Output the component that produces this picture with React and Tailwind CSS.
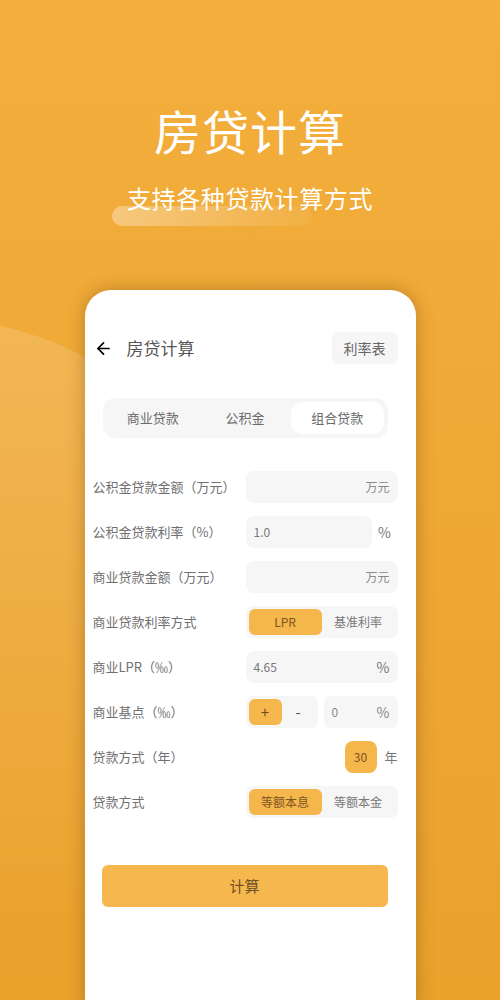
import { ArrowLeft } from 'lucide-react'

const font = { fontFamily: '"Noto Sans CJK SC", "Noto Sans", sans-serif' }

function Row({ label, children }) {
  return (
    <div className="flex items-center h-8">
      <div className="w-[153px] text-[13px] text-[#707070] whitespace-nowrap">{label}</div>
      <div className="flex-1 flex items-center h-8">{children}</div>
    </div>
  )
}

function Segment({ left, right }) {
  return (
    <div className="flex-1 h-8 rounded-lg bg-[#f6f6f6] flex items-center p-[3px] text-[12px]">
      <div className="w-[73px] h-[26px] rounded-md bg-[#f5b64c] text-[#7d5520] flex items-center justify-center">
        {left}
      </div>
      <div className="flex-1 text-center text-[#777]">{right}</div>
    </div>
  )
}

export default function App() {
  return (
    <div
      className="relative w-[500px] h-[1000px] overflow-hidden bg-gradient-to-b from-[#f3ae3c] to-[#eaa22d]"
      style={font}
    >
      {/* soft circle behind the card */}
      <div className="absolute left-[-360px] top-[320px] w-[600px] h-[600px] rounded-full bg-gradient-to-b from-white/15 to-white/0" />

      <div className="relative pt-[100px] flex flex-col items-center">
        <h1 className="text-[47px] leading-[60px] text-white tracking-[1px]">房贷计算</h1>
        <div className="relative mt-[20px]">
          <div className="absolute left-[-15px] top-[26px] w-[200px] h-[20px] rounded-full bg-gradient-to-r from-white/35 to-white/5" />
          <p className="relative text-[24px] leading-[36px] text-white tracking-[0.6px]">支持各种贷款计算方式</p>
        </div>
      </div>

      <div className="relative mt-[74px] mx-auto w-[331px] h-[720px] bg-white rounded-t-[26px] shadow-[0_0_18px_rgba(90,50,0,0.35)] pl-[8px] pr-[18px] pt-[42px]">
        <div className="flex items-center justify-between h-8">
          <div className="flex items-center">
            <ArrowLeft className="w-[19px] h-[19px] ml-[1px] text-black" strokeWidth={2.2} />
            <span className="ml-[14px] text-[17px] text-[#555]">房贷计算</span>
          </div>
          <button className="h-8 px-[12px] rounded-md bg-[#f6f6f6] text-[14px] text-[#666]">利率表</button>
        </div>

        <div className="mt-[34px] ml-[10px] w-[285px] h-10 rounded-xl bg-[#f6f6f6] grid grid-cols-3 p-1 text-[13px] text-[#6a6a6a]">
          <div className="flex items-center justify-center">商业贷款</div>
          <div className="flex items-center justify-center">公积金</div>
          <div className="flex items-center justify-center rounded-xl bg-white">组合贷款</div>
        </div>

        <div className="mt-[33px] flex flex-col gap-[13px]">
          <Row label="公积金贷款金额（万元）">
            <div className="flex-1 h-8 rounded-lg bg-[#f6f6f6] flex items-center justify-end pr-[8px] text-[12px] text-[#888]">万元</div>
          </Row>
          <Row label="公积金贷款利率（%）">
            <div className="w-[126px] h-8 rounded-lg bg-[#f6f6f6] flex items-center pl-[8px] text-[12px] text-[#777]">1.0</div>
            <div className="flex-1 text-center text-[14px] text-[#777]">%</div>
          </Row>
          <Row label="商业贷款金额（万元）">
            <div className="flex-1 h-8 rounded-lg bg-[#f6f6f6] flex items-center justify-end pr-[8px] text-[12px] text-[#888]">万元</div>
          </Row>
          <Row label="商业贷款利率方式">
            <Segment left="LPR" right="基准利率" />
          </Row>
          <Row label="商业LPR（‰）">
            <div className="flex-1 h-8 rounded-lg bg-[#f6f6f6] flex items-center justify-between px-[8px] text-[12px] text-[#777]">
              <span>4.65</span>
              <span className="text-[14px]">%</span>
            </div>
          </Row>
          <Row label="商业基点（‰）">
            <div className="w-[72px] h-8 rounded-lg bg-[#f6f6f6] flex items-center p-[3px]">
              <div className="w-[33px] h-[26px] rounded-md bg-[#f5b64c] text-[#6b4a1e] flex items-center justify-center text-[15px]">+</div>
              <div className="flex-1 text-center text-[15px] text-[#555]">-</div>
            </div>
            <div className="ml-[6px] flex-1 h-8 rounded-lg bg-[#f6f6f6] flex items-center justify-between px-[8px] text-[12px] text-[#888]">
              <span>0</span>
              <span className="text-[14px]">%</span>
            </div>
          </Row>
          <Row label="贷款方式（年）">
            <div className="flex-1" />
            <div className="w-8 h-8 rounded-lg bg-[#f5b64c] flex items-center justify-center text-[12px] text-[#7d5520]">30</div>
            <div className="w-[21px] text-right text-[13px] text-[#777]">年</div>
          </Row>
          <Row label="贷款方式">
            <Segment left="等额本息" right="等额本金" />
          </Row>
        </div>

        <button className="mt-[47px] ml-[9px] w-[286px] h-[42px] rounded-md bg-[#f6b74e] text-[15px] text-[#6e5226]">计算</button>
      </div>
    </div>
  )
}
